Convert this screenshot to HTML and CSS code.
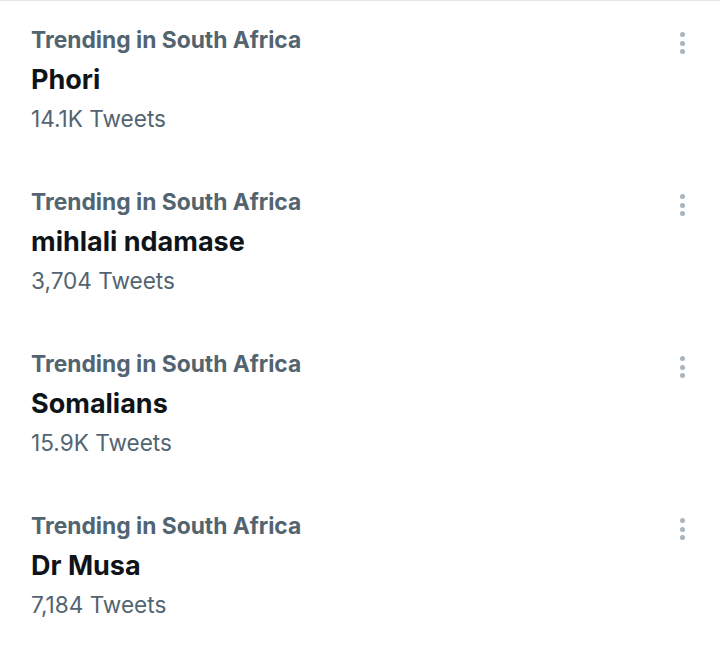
FILE: index.html
```html
<!DOCTYPE html>
<html>
<head>
<meta charset="utf-8">
<link rel="stylesheet" href="styles.css">
</head>
<body>
<div class="list">
  <div class="trend">
    <div class="info">
      <div class="meta">Trending in South Africa</div>
      <div class="name">Phori</div>
      <div class="count">14.1K Tweets</div>
    </div>
    <div class="more"><span></span><span></span><span></span></div>
  </div>
  <div class="trend">
    <div class="info">
      <div class="meta">Trending in South Africa</div>
      <div class="name">mihlali ndamase</div>
      <div class="count">3,704 Tweets</div>
    </div>
    <div class="more"><span></span><span></span><span></span></div>
  </div>
  <div class="trend">
    <div class="info">
      <div class="meta">Trending in South Africa</div>
      <div class="name">Somalians</div>
      <div class="count">15.9K Tweets</div>
    </div>
    <div class="more"><span></span><span></span><span></span></div>
  </div>
  <div class="trend">
    <div class="info">
      <div class="meta">Trending in South Africa</div>
      <div class="name">Dr Musa</div>
      <div class="count">7,184 Tweets</div>
    </div>
    <div class="more"><span></span><span></span><span></span></div>
  </div>
</div>
</body>
</html>
```
FILE: styles.css
```css
html, body {
  margin: 0;
  padding: 0;
  background: #ffffff;
}
body {
  font-family: Inter, Roboto, "Liberation Sans", sans-serif;
  width: 720px;
  height: 649px;
  overflow: hidden;
}
.list {
  border-top: 1px solid #e1e6ea;
}
.trend {
  display: flex;
  justify-content: space-between;
  padding: 19px 0 25px 31px;
}
.meta {
  font-size: 22.8px;
  line-height: 40px;
  font-weight: 700;
  color: #536471;
}
.name {
  font-size: 27px;
  line-height: 40px;
  font-weight: 700;
  color: #0f1419;
}
.count {
  font-size: 22.6px;
  line-height: 38px;
  color: #536471;
}
.more {
  display: flex;
  flex-direction: column;
  gap: 3.5px;
  margin: 12px 35px 0 0;
}
.more span {
  width: 5px;
  height: 5px;
  border-radius: 50%;
  background: #aab4bd;
}
```
